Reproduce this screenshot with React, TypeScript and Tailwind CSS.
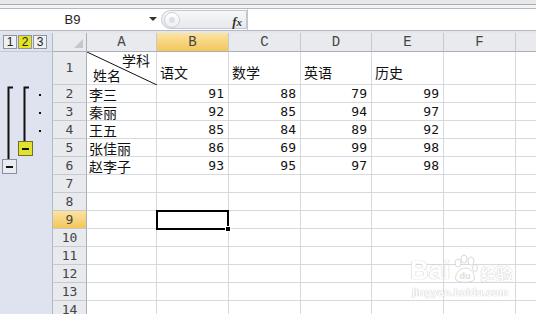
import React from "react";

const cjk = "font-['Noto_Sans_CJK_SC',sans-serif]";
const mono = "font-['DejaVu_Sans_Mono',monospace]";

const colW = ["w-[70px]", "w-[72px]", "w-[72px]", "w-[71px]", "w-[72px]", "w-[72px]", "w-[40px]"];
const letters = ["A", "B", "C", "D", "E", "F", ""];

const data: [string, number, number, number, number][] = [
  ["李三", 91, 88, 79, 99],
  ["秦丽", 92, 85, 94, 97],
  ["王五", 85, 84, 89, 92],
  ["张佳丽", 86, 69, 99, 98],
  ["赵李子", 93, 95, 97, 98],
];

function RowHead({ n, h, active }: { n: number; h: string; active?: boolean }) {
  return (
    <div
      className={`w-[34px] shrink-0 ${h} flex items-center justify-center border-b border-r border-b-[#c6cad0] border-r-[#a9afb8] text-[13px] text-[#444] ${mono} ${
        active ? "bg-linear-to-b from-[#fbe3a0] to-[#f4c65a]" : "bg-[#e8eaee]"
      }`}
    >
      {n}
    </div>
  );
}

function Cell({ i, children, right, h, end }: { i: number; children?: React.ReactNode; right?: boolean; h: string; end?: boolean }) {
  return (
    <div
      className={`${colW[i]} shrink-0 ${h} border-r border-b border-[#d6d9de] flex ${end ? "items-end" : "items-center"} ${
        right ? "justify-end pr-[4px]" : "pl-[2px]"
      }`}
    >
      {children}
    </div>
  );
}

export default function App() {
  return (
    <div className="w-[536px] h-[314px] overflow-hidden bg-white relative select-none">
      {/* ribbon bottom */}
      <div className="h-[4px] bg-[#e7e8ea]" />
      <div className="h-[1px] bg-[#a9adb3]" />
      <div className="h-[3px] bg-[#f3f4f6]" />
      {/* formula bar */}
      <div className="h-[23px] border-y border-[#b6bac0] bg-white flex">
        <div className="w-[161px] shrink-0 flex items-center relative">
          <div className="w-[145px] text-center text-[13px] text-[#222] font-['Liberation_Sans',sans-serif]">B9</div>
          <svg className="absolute left-[149px] top-[8px]" width="8" height="5" viewBox="0 0 8 5">
            <path d="M0 0 L8 0 L4 4 Z" fill="#333" />
          </svg>
        </div>
        <div className="w-[86px] shrink-0 flex items-center relative rounded-l-full border border-[#c4c8ce] bg-linear-to-b from-[#f7f8f9] to-[#e6e8eb] my-[1px]">
          <div className="ml-[2px] w-[16px] h-[16px] rounded-full border border-[#cdd0d5] bg-linear-to-b from-white to-[#eceef0] flex items-center justify-center">
            <div className="w-[6px] h-[6px] rounded-full bg-[#dcdfe3]" />
          </div>
          <div className="absolute right-[4px] top-[1px] text-[13px] italic font-bold text-[#333] font-['Liberation_Serif',serif]">
            f<span className="text-[11px]">x</span>
          </div>
        </div>
        <div className="flex-1 border-l border-[#c4c8ce] bg-white" />
      </div>
      <div className="h-[2px] bg-[#e3e6ec]" />

      {/* sheet */}
      <div className="flex">
        {/* outline area */}
        <div className="w-[53px] shrink-0 bg-[#dfe3ef] border-r border-[#b3b9c5] flex flex-col h-[290px]">
          <div className="h-[19px] flex items-center pl-[3px] gap-[1px] border-b border-[#c6cad0]">
            <div className="w-[14px] h-[14px] border border-[#8f959f] bg-[#eef0f4] text-[12px] leading-[12px] text-center text-[#222] font-['Liberation_Sans',sans-serif]">1</div>
            <div className="w-[14px] h-[14px] border border-[#8f959f] bg-[#e4e322] text-[12px] leading-[12px] text-center text-[#222] font-['Liberation_Sans',sans-serif]">2</div>
            <div className="w-[14px] h-[14px] border border-[#8f959f] bg-[#eef0f4] text-[12px] leading-[12px] text-center text-[#222] font-['Liberation_Sans',sans-serif]">3</div>
          </div>
          <div className="relative flex-1">
            <svg className="absolute left-0 top-0" width="52" height="140" viewBox="0 0 52 140">
              <path d="M8.5 35 V107 M7.5 35.5 H13" stroke="#111" strokeWidth="2" fill="none" />
              <rect x="2.5" y="107.5" width="14" height="14" fill="#e9ecf3" stroke="#8a909b" />
              <rect x="6" y="114" width="7" height="2" fill="#111" />
              <path d="M24.5 35 V89 M23.5 35.5 H29" stroke="#111" strokeWidth="2" fill="none" />
              <rect x="18.5" y="89.5" width="14" height="14" fill="#e2e22c" stroke="#6e6e30" />
              <rect x="22" y="96" width="7" height="2" fill="#111" />
              <rect x="39" y="42" width="2" height="2" fill="#111" />
              <rect x="39" y="60" width="2" height="2" fill="#111" />
              <rect x="39" y="78" width="2" height="2" fill="#111" />
            </svg>
          </div>
        </div>

        {/* grid */}
        <div className="flex flex-col">
          <div className="flex h-[19px]">
            <div className="w-[34px] shrink-0 h-[19px] bg-[#e8eaee] border-r border-b border-r-[#a9afb8] border-b-[#a9afb8] relative">
              <svg className="absolute right-[3px] bottom-[3px]" width="9" height="9" viewBox="0 0 9 9">
                <path d="M9 0 L9 9 L0 9 Z" fill="#c4c8ce" />
              </svg>
            </div>
            {letters.map((l, i) => (
              <div
                key={i}
                className={`${colW[i]} shrink-0 h-[19px] flex items-center justify-center border-r border-b border-r-[#c6cad0] border-b-[#a9afb8] text-[14px] text-[#444] font-['Liberation_Mono',monospace] ${
                  i === 1 ? "bg-linear-to-b from-[#fbe3a0] to-[#f4c65a]" : "bg-[#e8eaee]"
                }`}
              >
                {l}
              </div>
            ))}
          </div>

          {/* row 1 */}
          <div className="flex">
            <RowHead n={1} h="h-[33px]" />
            <div className="w-[70px] shrink-0 h-[33px] border-r border-b border-[#d6d9de] relative">
              <svg className="absolute left-0 top-0" width="70" height="33" viewBox="0 0 70 33">
                <line x1="0" y1="0" x2="70" y2="33" stroke="#111" strokeWidth="1" />
              </svg>
              <div className={`absolute right-[6px] top-[1px] text-[14px] leading-[15px] text-[#111] ${cjk}`}>学科</div>
              <div className={`absolute left-[6px] bottom-[1px] text-[14px] leading-[15px] text-[#111] ${cjk}`}>姓名</div>
            </div>
            {["语文", "数学", "英语", "历史", "", ""].map((t, i) => (
              <Cell key={i} i={i + 1} h="h-[33px]" end>
                <span className={`text-[14px] leading-[16px] pb-[4px] pl-[1px] text-[#111] ${cjk}`}>{t}</span>
              </Cell>
            ))}
          </div>

          {data.map((r, ri) => (
            <div key={ri} className="flex">
              <RowHead n={ri + 2} h="h-[18px]" />
              <Cell i={0} h="h-[18px]">
                <span className={`text-[14px] leading-[16px] text-[#111] ${cjk}`}>{r[0]}</span>
              </Cell>
              {[r[1], r[2], r[3], r[4]].map((v, j) => (
                <Cell key={j} i={j + 1} right h="h-[18px]">
                  <span className={`text-[13px] leading-[16px] text-[#111] ${mono}`}>{v}</span>
                </Cell>
              ))}
              <Cell i={5} h="h-[18px]" />
              <Cell i={6} h="h-[18px]" />
            </div>
          ))}

          {[7, 8, 9, 10, 11, 12, 13, 14].map((n) => (
            <div key={n} className="flex">
              <RowHead n={n} h="h-[18px]" active={n === 9} />
              {colW.map((w, i) => (
                <div key={i} className={`${w} shrink-0 h-[18px] border-r border-b border-[#d6d9de] relative`}>
                  {n === 9 && i === 1 && (
                    <div className="absolute -left-[1px] -top-[1px] w-[73px] h-[20px] border-2 border-black z-10">
                      <div className="absolute -right-[4px] -bottom-[4px] w-[6px] h-[6px] bg-black border border-white" />
                    </div>
                  )}
                </div>
              ))}
            </div>
          ))}
        </div>
      </div>

      {/* watermark */}
      <div className="absolute left-[410px] top-[254px] pointer-events-none">
        <div className="flex items-end gap-[2px]">
          <span className="text-[26px] leading-[28px] font-bold text-white font-['Liberation_Sans',sans-serif] [text-shadow:0_0_1px_#c9c9c9,0_0_1px_#c9c9c9]">Bai</span>
          <svg width="26" height="30" viewBox="0 0 26 30">
            <g fill="white" stroke="#d0d0d0" strokeWidth="0.8">
              <ellipse cx="6" cy="9" rx="3" ry="4" />
              <ellipse cx="12" cy="5" rx="3" ry="4" />
              <ellipse cx="19" cy="7" rx="3" ry="4" />
              <ellipse cx="23" cy="14" rx="2.5" ry="3.5" />
              <path d="M4 26 C2 20 8 14 13 14 C19 14 24 20 22 26 C20 29 6 29 4 26 Z" />
            </g>
            <text x="13" y="25" textAnchor="middle" fontSize="9" fontWeight="bold" fill="#dcdcdc" fontFamily="Liberation Sans, sans-serif">du</text>
          </svg>
          <span className={`text-[16px] leading-[22px] font-bold text-white ${cjk} [text-shadow:0_0_1px_#c9c9c9,0_0_1px_#c9c9c9]`}>经验</span>
        </div>
        <div className="text-[11px] leading-[12px] font-bold text-white font-['Liberation_Sans',sans-serif] [text-shadow:0_0_1px_#c9c9c9,0_0_1px_#c9c9c9] mt-[2px] pl-[2px]">
          jingyan.baidu.com
        </div>
      </div>
    </div>
  );
}
